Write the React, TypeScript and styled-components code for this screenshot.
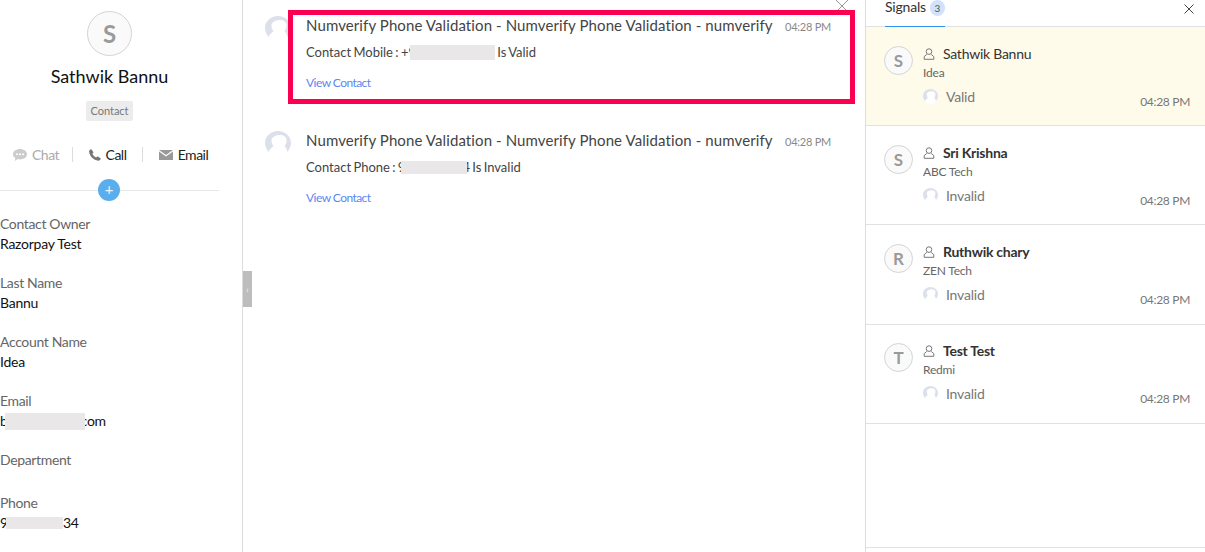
import styled, { createGlobalStyle } from "styled-components";

const GlobalStyle = createGlobalStyle`
  html, body {
    margin: 0;
    padding: 0;
    background: #fff;
    font-family: Lato, "Open Sans", sans-serif;
    overflow: hidden;
  }
  * {
    box-sizing: border-box;
  }
`;

const Page = styled.div`
  display: grid;
  grid-template-columns: 243px 622px 340px;
  width: 1205px;
  height: 552px;
  overflow: hidden;
`;

const LeftPanel = styled.aside`
  border-right: 1px solid #dcdcdc;
  height: 552px;
  overflow: hidden;
  padding-top: 11px;
`;

const ProfileHead = styled.div`
  width: 219px;
  display: flex;
  flex-direction: column;
  align-items: center;
`;

const Avatar = styled.div<{ $size: number; $font: number }>`
  width: ${(p) => p.$size}px;
  height: ${(p) => p.$size}px;
  flex: none;
  border: 1px solid #d4d4d4;
  border-radius: 50%;
  background: #fafafa;
  color: #9a9a9a;
  font-size: ${(p) => p.$font}px;
  font-weight: 700;
  display: flex;
  align-items: center;
  justify-content: center;
`;

const Name = styled.div`
  margin-top: 8px;
  height: 24px;
  font-size: 18px;
  line-height: 24px;
  color: #111;
`;

const Tag = styled.div`
  margin-top: 13px;
  height: 20px;
  padding: 0 4.5px;
  background: #ececec;
  border-radius: 2px;
  font-size: 11px;
  line-height: 20px;
  color: #777;
`;

const Actions = styled.div`
  margin-top: 24px;
  height: 20px;
  align-self: flex-start;
  display: grid;
  grid-template-columns: 72px 70px 82px;
  font-size: 14px;
  letter-spacing: -0.5px;
`;

const Action = styled.div<{ $muted?: boolean; $divided?: boolean }>`
  display: flex;
  align-items: center;
  justify-content: center;
  gap: 5px;
  height: 15px;
  margin-top: 2px;
  color: ${(p) => (p.$muted ? "#aaa" : "#222")};
  border-left: ${(p) => (p.$divided ? "1px solid #ddd" : "none")};
`;

const PlusRow = styled.div`
  position: relative;
  width: 219px;
  height: 1px;
  margin-top: 25px;
  background: #e8e8e8;
`;

const PlusButton = styled.div`
  position: absolute;
  left: 98px;
  top: -11px;
  width: 22px;
  height: 22px;
  border-radius: 50%;
  background: #5aaeee;
  color: #e6f3fd;
  font-size: 15px;
  line-height: 21px;
  text-align: center;
`;

const Fields = styled.div`
  margin-top: 23px;
  display: flex;
  flex-direction: column;
`;

const Field = styled.div<{ $gap: number }>`
  margin-bottom: ${(p) => p.$gap}px;
  font-size: 14px;
  line-height: 20px;
`;

const FieldLabel = styled.div`
  color: #666;
  letter-spacing: -0.35px;
`;

const FieldValue = styled.div`
  color: #111;
  display: flex;
  align-items: center;
  letter-spacing: -0.25px;
`;

// grey blur over private digits, it sits on top of the cut off characters next to it
const Masked = styled.span<{ $w: number; $h: number; $pull?: number; $trail?: number }>`
  position: relative;
  z-index: 1;
  display: inline-block;
  flex: none;
  width: ${(p) => p.$w}px;
  height: ${(p) => p.$h}px;
  margin-left: ${(p) => p.$pull ?? 0}px;
  margin-right: ${(p) => p.$trail ?? 0}px;
  background: #e9e7e7;
`;

const Middle = styled.main`
  position: relative;
  height: 552px;
  padding: 9px 0 0 22px;
`;

const CollapseHandle = styled.div`
  position: absolute;
  left: 0;
  top: 271px;
  width: 9px;
  height: 36px;
  background: #bdbdbd;
  color: #eee;
  font-size: 10px;
  line-height: 36px;
  text-align: center;
`;

const CloseCorner = styled.svg`
  position: absolute;
  left: 591px;
  top: -2px;
`;

const Highlight = styled.div`
  position: absolute;
  z-index: 2;
  left: 45px;
  top: 10px;
  width: 567px;
  height: 94px;
  border: 5px solid #fb0050;
  pointer-events: none;
`;

const Message = styled.div`
  display: flex;
  height: 115px;
`;

const MessageAvatar = styled.div`
  flex: none;
  width: 26px;
  height: 21px;
  margin-top: 7px;
  overflow: hidden;
`;

const MessageBody = styled.div`
  margin-left: 15px;
  width: 525px;
  flex: none;
`;

const MessageHead = styled.div`
  display: flex;
  justify-content: space-between;
  align-items: center;
  height: 32px;
`;

const MessageTitle = styled.div`
  font-size: 15px;
  letter-spacing: 0.1px;
  white-space: nowrap;
  color: #444;
`;

const MessageTime = styled.div`
  flex: none;
  margin-top: 3px;
  font-size: 11px;
  letter-spacing: -0.25px;
  color: #888;
`;

const MessageLine = styled.div`
  display: flex;
  align-items: center;
  height: 20px;
  margin-top: 1px;
  font-size: 13px;
  word-spacing: -1px;
  white-space: pre;
  color: #444;
`;

const LinkText = styled.a`
  display: block;
  margin-top: 13px;
  font-size: 12px;
  line-height: 16px;
  letter-spacing: -0.55px;
  color: #5b87f0;
`;

const RightPanel = styled.aside`
  border-left: 1px solid #dcdcdc;
  height: 552px;
  display: flex;
  flex-direction: column;
`;

const TabBar = styled.div`
  position: relative;
  display: flex;
  height: 27px;
  flex: none;
  padding-left: 19px;
  border-bottom: 1px solid #e2e2e2;
`;

const Tab = styled.div`
  display: flex;
  align-items: flex-start;
  gap: 4px;
  height: 27px;
  border-bottom: 1px solid #2f96ee;
  font-size: 14px;
  line-height: 14px;
  letter-spacing: -0.2px;
  color: #333;
`;

const Badge = styled.span`
  width: 15px;
  height: 16px;
  border-radius: 8px;
  background: #d2e2fb;
  color: #555;
  font-size: 10px;
  line-height: 16px;
  text-align: center;
`;

const CloseIcon = styled.svg`
  position: absolute;
  right: 11px;
  top: 4px;
`;

const SignalRow = styled.div<{ $active?: boolean }>`
  height: 99px;
  flex: none;
  padding: 19px 15px 0 18px;
  display: flex;
  gap: 10px;
  background: ${(p) => (p.$active ? "#fffbeb" : "#fff")};
  border-bottom: 1px solid #e2e2e2;

  &:nth-child(4) {
    height: 100px;
  }

  &:nth-child(5) {
    height: 99px;
    padding-top: 18px;
  }
`;

const SignalBody = styled.div`
  flex: 1;
`;

const SignalName = styled.div`
  display: flex;
  align-items: center;
  gap: 8px;
  height: 15px;
`;

const NameText = styled.span<{ $active?: boolean }>`
  font-size: 14px;
  font-weight: ${(p) => (p.$active ? 400 : 700)};
  letter-spacing: -0.25px;
  color: #333;
`;

const Company = styled.div`
  margin-top: 4px;
  height: 15px;
  font-size: 12px;
  line-height: 15px;
  letter-spacing: -0.2px;
  color: #666;
`;

const SignalFoot = styled.div`
  margin-top: 3px;
  display: flex;
  align-items: flex-start;
  justify-content: space-between;
`;

const Status = styled.div`
  margin-top: 5px;
  display: flex;
  align-items: center;
  gap: 8px;
  height: 16px;
  font-size: 14px;
  letter-spacing: -0.2px;
  color: #777;
`;

const SignalTime = styled.div`
  margin-top: 11px;
  font-size: 12px;
  letter-spacing: -0.3px;
  color: #777;
`;

const BottomRule = styled.div`
  margin-top: auto;
  margin-bottom: 4px;
  height: 1px;
  background: #e2e2e2;
`;

const GhostAvatar = ({ size, light }: { size: number; light?: boolean }) => (
  <svg width={size} height={size} viewBox="0 0 26 26" style={{ flex: "none" }}>
    {light && <circle cx="13" cy="13" r="13" fill="#fff" />}
    <path
      d="M3.500 21C1 17.500 0 15 0 12 0 5 6 0 13 0s13 5 13 12c0 3-1 5.500-3.500 9-.5-2.500-1.500-4.500-3-6 1.500-1.500 2-3.500 2-5.500 0-3.500-2.500-5.500-6.500-5.500S6.500 6 6.500 9.500c0 2 .5 4 2 5.500-1.500 1.500-4.500 3.500-5 6z"
      fill="#dce0ea"
    />
  </svg>
);

const PersonIcon = () => (
  <svg width="12" height="12" viewBox="0 0 12 12" fill="none" stroke="#777" strokeWidth="1" style={{ flex: "none" }}>
    <circle cx="6" cy="3.600" r="2.800" />
    <path d="M3.800 6.400 1.200 8.600v2.700h9.600V8.600L8.200 6.400" />
  </svg>
);

const signals = [
  { letter: "S", name: "Sathwik Bannu", company: "Idea", status: "Valid", active: true },
  { letter: "S", name: "Sri Krishna", company: "ABC Tech", status: "Invalid" },
  { letter: "R", name: "Ruthwik chary", company: "ZEN Tech", status: "Invalid" },
  { letter: "T", name: "Test Test", company: "Redmi", status: "Invalid" },
];

export default function App() {
  return (
    <>
      <GlobalStyle />
      <Page>
        <LeftPanel>
          <ProfileHead>
            <Avatar $size={45} $font={24}>S</Avatar>
            <Name>Sathwik Bannu</Name>
            <Tag>Contact</Tag>
            <Actions>
              <Action $muted>
                <svg width="14" height="12" viewBox="0 0 14 12">
                  <path d="M7 0c3.900 0 7 2.300 7 5.200s-3.100 5.200-7 5.200c-.8 0-1.500-.1-2.200-.3L1.800 12l.6-3C.9 8 0 6.700 0 5.200 0 2.300 3.100 0 7 0z" fill="#ccc" />
                  <circle cx="4" cy="5.200" r="1" fill="#fff" />
                  <circle cx="7" cy="5.200" r="1" fill="#fff" />
                  <circle cx="10" cy="5.200" r="1" fill="#fff" />
                </svg>
                Chat
              </Action>
              <Action $divided>
                <svg width="12" height="12" viewBox="0 0 12 12">
                  <path d="M2.600.4 4.300 3c.2.300.1.600-.1.900l-.9.900c.7 1.500 2.200 3 3.800 3.800l.9-.9c.3-.2.600-.3.900-.1l2.600 1.700c.3.200.4.500.2.800-.6 1.100-1.500 1.700-2.500 1.600C4.600 11.300.7 7.400.1 2.800 0 1.800.7.900 1.800.3c.3-.2.600-.1.800.1z" fill="#777" />
                </svg>
                Call
              </Action>
              <Action $divided>
                <svg width="14" height="10" viewBox="0 0 14 10">
                  <path d="M0 0h14L7 5z" fill="#999" />
                  <path d="M0 1.500 7 6.500l7-5V10H0z" fill="#999" />
                </svg>
                Email
              </Action>
            </Actions>
            <PlusRow>
              <PlusButton>+</PlusButton>
            </PlusRow>
          </ProfileHead>
          <Fields>
            <Field $gap={19}>
              <FieldLabel>Contact Owner</FieldLabel>
              <FieldValue>Razorpay Test</FieldValue>
            </Field>
            <Field $gap={19}>
              <FieldLabel>Last Name</FieldLabel>
              <FieldValue>Bannu</FieldValue>
            </Field>
            <Field $gap={19}>
              <FieldLabel>Account Name</FieldLabel>
              <FieldValue>Idea</FieldValue>
            </Field>
            <Field $gap={19}>
              <FieldLabel>Email</FieldLabel>
              <FieldValue>
                b<Masked $w={80} $h={17} $pull={-3} $trail={-4} />com
              </FieldValue>
            </Field>
            <Field $gap={3}>
              <FieldLabel>Department</FieldLabel>
              <FieldValue>&nbsp;</FieldValue>
            </Field>
            <Field $gap={0}>
              <FieldLabel>Phone</FieldLabel>
              <FieldValue>
                9<Masked $w={57} $h={12} $pull={-2} />34
              </FieldValue>
            </Field>
          </Fields>
        </LeftPanel>

        <Middle>
          <CollapseHandle>‹</CollapseHandle>
          <CloseCorner width="16" height="16" viewBox="0 0 16 16" fill="none" stroke="#999" strokeWidth="1">
            <path d="M1 1l14 14M15 1 1 15" />
          </CloseCorner>
          <Message>
            <MessageAvatar>
              <GhostAvatar size={26} />
            </MessageAvatar>
            <MessageBody>
              <MessageHead>
                <MessageTitle>Numverify Phone Validation - Numverify Phone Validation - numverify</MessageTitle>
                <MessageTime>04:28 PM</MessageTime>
              </MessageHead>
              <MessageLine>
                Contact Mobile : +9<Masked $w={85} $h={15} $pull={-6} /> Is Valid
              </MessageLine>
              <LinkText>View Contact</LinkText>
            </MessageBody>
          </Message>
          <Message>
            <MessageAvatar>
              <GhostAvatar size={26} />
            </MessageAvatar>
            <MessageBody>
              <MessageHead>
                <MessageTitle>Numverify Phone Validation - Numverify Phone Validation - numverify</MessageTitle>
                <MessageTime>04:28 PM</MessageTime>
              </MessageHead>
              <MessageLine>
                Contact Phone : 9<Masked $w={66} $h={13} $pull={-4} $trail={-5} />4 Is Invalid
              </MessageLine>
              <LinkText>View Contact</LinkText>
            </MessageBody>
          </Message>
          <Highlight />
        </Middle>

        <RightPanel>
          <TabBar>
            <Tab>
              Signals <Badge>3</Badge>
            </Tab>
            <CloseIcon width="10" height="10" viewBox="0 0 10 10" fill="none" stroke="#444" strokeWidth="1">
              <path d="M.5.5l9 9M9.500.5l-9 9" />
            </CloseIcon>
          </TabBar>
          {signals.map((s) => (
            <SignalRow key={s.name} $active={s.active}>
              <Avatar $size={29} $font={17}>{s.letter}</Avatar>
              <SignalBody>
                <SignalName>
                  <PersonIcon />
                  <NameText $active={s.active}>{s.name}</NameText>
                </SignalName>
                <Company>{s.company}</Company>
                <SignalFoot>
                  <Status>
                    <GhostAvatar size={15} light={s.active} />
                    {s.status}
                  </Status>
                  <SignalTime>04:28 PM</SignalTime>
                </SignalFoot>
              </SignalBody>
            </SignalRow>
          ))}
          <BottomRule />
        </RightPanel>
      </Page>
    </>
  );
}
